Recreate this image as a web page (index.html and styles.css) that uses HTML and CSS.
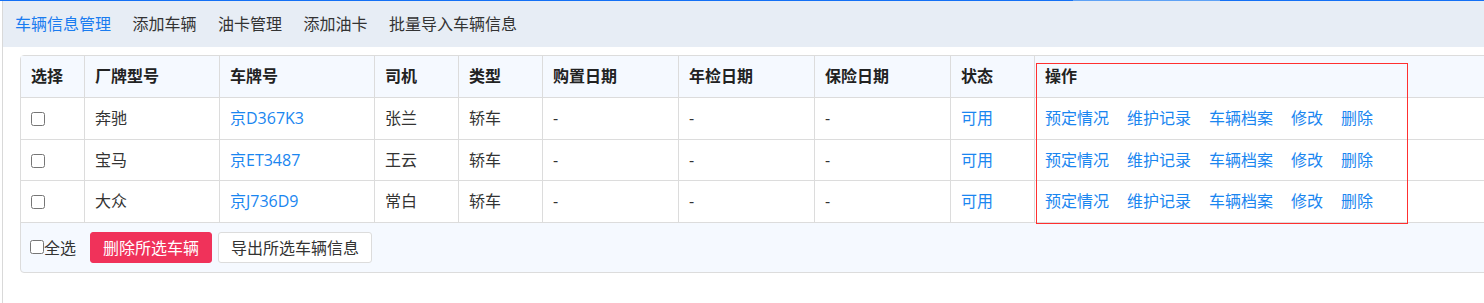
FILE: index.html
```html
<!DOCTYPE html>
<html lang="zh-CN">
<head>
    <meta charset="UTF-8">
    <meta name="viewport" content="width=device-width, initial-scale=1.0">
    <title>车辆信息管理</title>
    <link rel="stylesheet" href="styles.css">
</head>
<body>
    <div class="topline"></div>
    <div class="page">
        <nav class="tabs">
            <a class="tab active" href="#">车辆信息管理</a>
            <a class="tab" href="#">添加车辆</a>
            <a class="tab" href="#">油卡管理</a>
            <a class="tab" href="#">添加油卡</a>
            <a class="tab" href="#">批量导入车辆信息</a>
        </nav>

        <div class="panel">
            <table class="grid">
                <colgroup>
                    <col class="c-check">
                    <col class="c-brand">
                    <col class="c-plate">
                    <col class="c-short">
                    <col class="c-short">
                    <col class="c-date">
                    <col class="c-date">
                    <col class="c-date">
                    <col class="c-short">
                    <col class="c-ops">
                </colgroup>
                <thead>
                    <tr>
                        <th>选择</th>
                        <th>厂牌型号</th>
                        <th>车牌号</th>
                        <th>司机</th>
                        <th>类型</th>
                        <th>购置日期</th>
                        <th>年检日期</th>
                        <th>保险日期</th>
                        <th>状态</th>
                        <th>操作</th>
                    </tr>
                </thead>
                <tbody>
                    <tr>
                        <td><input type="checkbox"></td>
                        <td>奔驰</td>
                        <td><a href="#">京D367K3</a></td>
                        <td>张兰</td>
                        <td>轿车</td>
                        <td>-</td>
                        <td>-</td>
                        <td>-</td>
                        <td><a href="#">可用</a></td>
                        <td class="ops"><a href="#">预定情况</a><a href="#">维护记录</a><a href="#">车辆档案</a><a href="#">修改</a><a href="#">删除</a></td>
                    </tr>
                    <tr>
                        <td><input type="checkbox"></td>
                        <td>宝马</td>
                        <td><a href="#">京ET3487</a></td>
                        <td>王云</td>
                        <td>轿车</td>
                        <td>-</td>
                        <td>-</td>
                        <td>-</td>
                        <td><a href="#">可用</a></td>
                        <td class="ops"><a href="#">预定情况</a><a href="#">维护记录</a><a href="#">车辆档案</a><a href="#">修改</a><a href="#">删除</a></td>
                    </tr>
                    <tr>
                        <td><input type="checkbox"></td>
                        <td>大众</td>
                        <td><a href="#">京J736D9</a></td>
                        <td>常白</td>
                        <td>轿车</td>
                        <td>-</td>
                        <td>-</td>
                        <td>-</td>
                        <td><a href="#">可用</a></td>
                        <td class="ops"><a href="#">预定情况</a><a href="#">维护记录</a><a href="#">车辆档案</a><a href="#">修改</a><a href="#">删除</a></td>
                    </tr>
                </tbody>
            </table>

            <div class="footer">
                <label class="all"><input type="checkbox">全选</label>
                <button class="btn danger">删除所选车辆</button>
                <button class="btn">导出所选车辆信息</button>
            </div>

            <div class="mark"></div>
        </div>
    </div>
</body>
</html>
```

FILE: styles.css
```css
html, body {
    margin: 0;
    overflow: hidden;
}
body {
    background-color: #fff;
    color: #333;
    font-family: "Open Sans", "Noto Sans CJK SC", sans-serif;
    font-size: 16px;
}
a {
    color: #1a86f0;
    text-decoration: none;
}

.topline {
    height: 1px;
    background: linear-gradient(90deg, #1470f5 0, #1470f5 1073px, #5fa2f5 1073px, #5fa2f5 1220px, #1470f5 1220px);
}
.page {
    margin-left: 2px;
    border-left: 1px solid #d9d9d9;
    min-height: 302px;
}

.tabs {
    display: flex;
    gap: 21.5px;
    height: 46px;
    padding-left: 12px;
    background-color: #e7edf5;
    line-height: 46px;
}
.tab {
    color: #333;
}
.tab.active {
    color: #1a7cf0;
}

.panel {
    position: relative;
    width: 1500px;
    margin: 8px 0 0 17px;
    border: 1px solid #dcdcdc;
    border-radius: 4px;
    background-color: #f5f9ff;
}
.grid {
    table-layout: fixed;
    border-collapse: separate;
    border-spacing: 0;
    width: 100%;
}
.c-check { width: 64px; }
.c-brand { width: 135px; }
.c-plate { width: 155px; }
.c-short { width: 84px; }
.c-date { width: 136px; }
.grid th, .grid td {
    padding: 10px;
    border-right: 1px solid #dcdcdc;
    border-bottom: 1px solid #dcdcdc;
    text-align: left;
    white-space: nowrap;
}
.grid th {
    line-height: 21px;
    font-weight: 600;
    color: #222;
    background-color: #f5f9ff;
}
.grid td {
    line-height: 20.5px;
    background-color: #fff;
}
.grid th:last-child, .grid td:last-child {
    border-right: none;
}
.grid input, .all input {
    width: 14px;
    height: 14px;
    margin: 0;
    vertical-align: -2px;
}
.ops a {
    margin-right: 18px;
}

.footer {
    display: flex;
    align-items: center;
    padding: 9px;
}
.all {
    display: flex;
    align-items: center;
    margin-right: 14px;
}
.btn {
    height: 31px;
    padding: 0 12px;
    margin-right: 6px;
    border: 1px solid #dcdcdc;
    border-radius: 3px;
    background-color: #fff;
    color: #333;
    font: inherit;
}
.btn.danger {
    border-color: #f0325a;
    background-color: #f0325a;
    color: #fff;
}

.mark {
    position: absolute;
    left: 1015px;
    top: 7px;
    width: 372px;
    height: 161px;
    box-sizing: border-box;
    border: 1px solid #ff3030;
    pointer-events: none;
}
```
